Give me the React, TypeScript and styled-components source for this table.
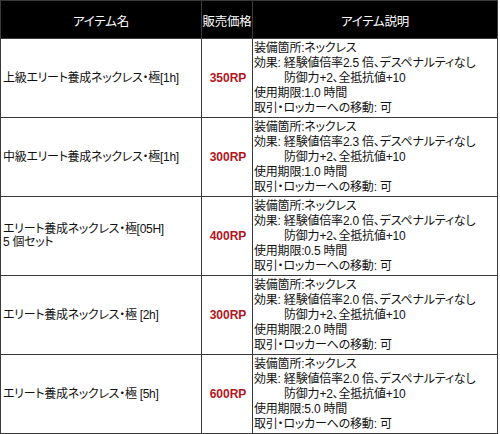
import React from "react";
import styled, { createGlobalStyle } from "styled-components";

const Global = createGlobalStyle`
  html, body { margin: 0; padding: 0; background: #fff; }
  body { font-family: "Liberation Sans", "Noto Sans CJK JP", sans-serif; }
`;

const Grid = styled.div`
  display: grid;
  grid-template-columns: 200px 50px 244px;
  grid-template-rows: 37px repeat(5, 78px);
  gap: 1px;
  padding: 1px;
  width: 498px;
  box-sizing: border-box;
  background: #3a3a3a;
  font-family: "Liberation Sans", "Noto Sans CJK JP", sans-serif;
  font-feature-settings: "palt";
`;

const HeadCell = styled.div`
  background: #000;
  color: #fff;
  font-size: 12.5px;
  display: flex;
  align-items: center;
  justify-content: center;
  padding-top: 2px;
  white-space: nowrap;
  letter-spacing: -0.2px;
`;

const NameCell = styled.div`
  background: #fff;
  color: #111;
  font-size: 12px;
  line-height: 13px;
  letter-spacing: -0.3px;
  display: flex;
  flex-direction: column;
  justify-content: center;
  padding-left: 2px;
  white-space: nowrap;
`;

const PriceCell = styled.div`
  background: #fff;
  color: #b3151b;
  font-family: "Liberation Sans", Arial, sans-serif;
  font-weight: bold;
  font-size: 12px;
  display: flex;
  align-items: center;
  justify-content: center;
  padding-left: 2px;
`;

const DescCell = styled.div`
  background: #fff;
  color: #111;
  font-size: 12px;
  line-height: 15px;
  letter-spacing: -0.2px;
  display: flex;
  flex-direction: column;
  justify-content: center;
  padding-left: 1px;
  white-space: nowrap;
`;

const DescLine = styled.div<{ $indent?: boolean }>`
  padding-left: ${(p) => (p.$indent ? "30px" : "0")};
`;

type Item = { name: string[]; price: string; rate: string; term: string };

const items: Item[] = [
  { name: ["上級エリート養成ネックレス・極[1h]"], price: "350RP", rate: "2.5", term: "1.0" },
  { name: ["中級エリート養成ネックレス・極[1h]"], price: "300RP", rate: "2.3", term: "1.0" },
  { name: ["エリート養成ネックレス・極[05H]", "5 個セット"], price: "400RP", rate: "2.0", term: "0.5" },
  { name: ["エリート養成ネックレス・極 [2h]"], price: "300RP", rate: "2.0", term: "2.0" },
  { name: ["エリート養成ネックレス・極 [5h]"], price: "600RP", rate: "2.0", term: "5.0" },
];

export default function App() {
  return (
    <>
      <Global />
      <Grid>
        <HeadCell>アイテム名</HeadCell>
        <HeadCell>販売価格</HeadCell>
        <HeadCell>アイテム説明</HeadCell>
        {items.map((it, i) => (
          <React.Fragment key={i}>
            <NameCell>
              {it.name.map((n, j) => (
                <div key={j}>{n}</div>
              ))}
            </NameCell>
            <PriceCell>{it.price}</PriceCell>
            <DescCell>
              <DescLine>装備箇所:ネックレス</DescLine>
              <DescLine>効果: 経験値倍率{it.rate} 倍、デスペナルティなし</DescLine>
              <DescLine $indent>防御力+2、全抵抗値+10</DescLine>
              <DescLine>使用期限:{it.term} 時間</DescLine>
              <DescLine>取引・ロッカーへの移動: 可</DescLine>
            </DescCell>
          </React.Fragment>
        ))}
      </Grid>
    </>
  );
}
